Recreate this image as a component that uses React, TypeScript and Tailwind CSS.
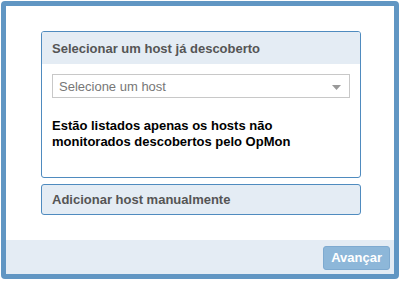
import React from "react";

export default function App() {
    return (
        <div className="w-[400px] h-[281px] bg-white font-['Liberation_Sans',Arial,sans-serif]">
            <div className="m-px w-[398px] h-[278px] border-[5px] border-[#6196c3] rounded-[4px] flex flex-col bg-white">
                <div className="flex-1 pt-[25px] pl-[35px] flex flex-col gap-[6px]">
                    <div className="w-[320px] border border-[#4f8bbf] rounded-[3px] overflow-hidden">
                        <div className="h-[32px] bg-[#e4ecf4] flex items-center px-[10px] pt-[2px] text-[13px] font-bold text-[#555]">
                            Selecionar um host já descoberto
                        </div>
                        <div className="px-[10px] pt-[10px] pb-[27px]">
                            <div className="h-[24px] border border-[#c8c8c8] flex items-center justify-between pl-[6px] pr-[8px] pt-[2px] text-[13px] text-[#777]">
                                <span>Selecione um host</span>
                                <svg width="9" height="5" viewBox="0 0 9 5">
                                    <path d="M0 0 L9 0 L4.5 5 Z" fill="#999" />
                                </svg>
                            </div>
                            <p className="mt-[20px] text-[13px] leading-[16px] font-bold text-black">
                                Estão listados apenas os hosts não monitorados descobertos pelo OpMon
                            </p>
                        </div>
                    </div>
                    <div className="w-[320px] h-[31px] border border-[#4f8bbf] rounded-[3px] bg-[#e4ecf4] flex items-center px-[10px] pt-px text-[13px] font-bold text-[#555]">
                        Adicionar host manualmente
                    </div>
                </div>
                <div className="h-[34px] bg-[#e4ecf4] flex items-center justify-end pr-[4px] pt-[2px]">
                    <button className="h-[24px] px-[7px] rounded-[3px] bg-[#8db7d9] border border-[#7eaad0] text-white text-[13px] font-bold">
                        Avançar
                    </button>
                </div>
            </div>
        </div>
    );
}
